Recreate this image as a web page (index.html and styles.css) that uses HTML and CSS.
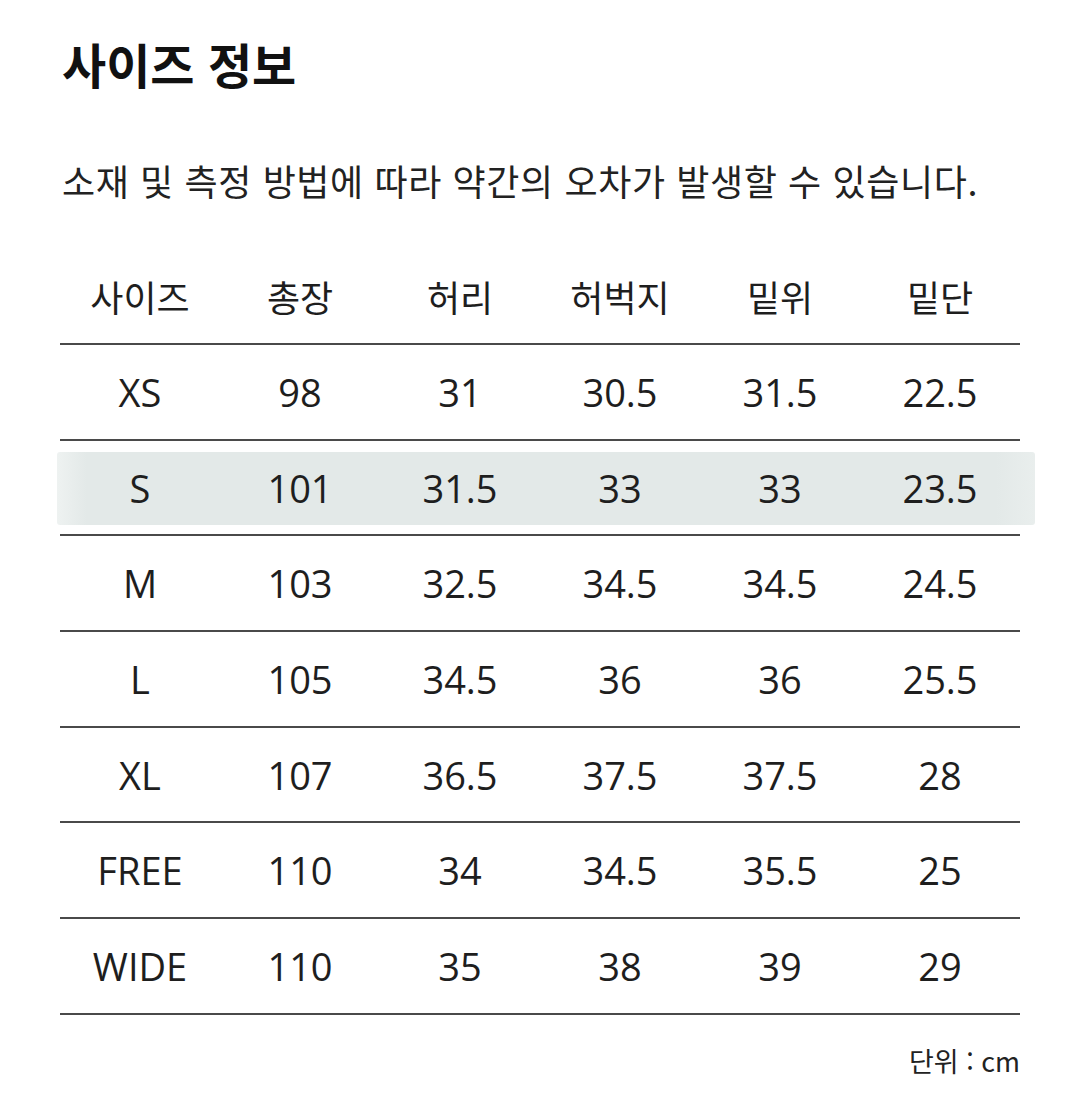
FILE: index.html
```html
<!DOCTYPE html>
<html lang="ko">
<head>
<meta charset="utf-8">
<link rel="stylesheet" href="styles.css">
</head>
<body>
<div class="page">
  <h1 class="title">사이즈 정보</h1>
  <p class="desc">소재 및 측정 방법에 따라 약간의 오차가 발생할 수 있습니다.</p>
  <div class="table">
    <div class="row head"><div class="cells"><span>사이즈</span><span>총장</span><span>허리</span><span>허벅지</span><span>밑위</span><span>밑단</span></div></div>
    <div class="row"><div class="cells"><span>XS</span><span>98</span><span>31</span><span>30.5</span><span>31.5</span><span>22.5</span></div></div>
    <div class="row hl"><div class="cells"><span>S</span><span>101</span><span>31.5</span><span>33</span><span>33</span><span>23.5</span></div></div>
    <div class="row"><div class="cells"><span>M</span><span>103</span><span>32.5</span><span>34.5</span><span>34.5</span><span>24.5</span></div></div>
    <div class="row"><div class="cells"><span>L</span><span>105</span><span>34.5</span><span>36</span><span>36</span><span>25.5</span></div></div>
    <div class="row"><div class="cells"><span>XL</span><span>107</span><span>36.5</span><span>37.5</span><span>37.5</span><span>28</span></div></div>
    <div class="row"><div class="cells"><span>FREE</span><span>110</span><span>34</span><span>34.5</span><span>35.5</span><span>25</span></div></div>
    <div class="row"><div class="cells"><span>WIDE</span><span>110</span><span>35</span><span>38</span><span>39</span><span>29</span></div></div>
  </div>
  <p class="unit">단위 : cm</p>
</div>
</body>
</html>
```
FILE: styles.css
```css
html, body {
  margin: 0;
  padding: 0;
  background: #ffffff;
}
body {
  font-family: "Open Sans", "Noto Sans CJK KR", sans-serif;
  color: #1e1e1e;
}
.page {
  width: 960px;
  padding-left: 60px;
}
.title {
  margin: 33px 0 0 2px;
  font-family: "Noto Sans CJK KR", sans-serif;
  font-weight: 700;
  font-size: 48px;
  line-height: 60px;
  height: 60px;
  color: #111;
}
.desc {
  margin: 62px 0 0 2px;
  font-family: "Noto Sans CJK KR", sans-serif;
  font-size: 36px;
  line-height: 50px;
  height: 50px;
  color: #222;
  letter-spacing: 0.6px;
  white-space: nowrap;
}
.table {
  margin-top: 43px;
}
.row {
  height: 93.7px;
  border-bottom: 2px solid #4a4a4a;
  display: flex;
  align-items: center;
}
.row.head {
  height: 95px;
}
.cells {
  flex: 1;
  display: grid;
  grid-template-columns: repeat(6, 160px);
  font-size: 38px;
  line-height: 50px;
}
.cells span {
  text-align: center;
}
.head .cells {
  font-family: "Noto Sans CJK KR", sans-serif;
  font-size: 36px;
}
.row.hl {
  align-items: flex-start;
}
.hl .cells {
  margin: 11px -15px 0 -3px;
  height: 73px;
  align-items: center;
  padding-left: 3px;
  grid-template-columns: repeat(6, 160px) 15px;
  background: linear-gradient(90deg, #eef2f1 0%, #e3e9e8 3%, #e3e9e8 96%, #e9eeed 100%);
  border-radius: 3px;
}
.unit {
  margin: 26px 0 0 0;
  text-align: right;
  font-family: "Noto Sans CJK KR", sans-serif;
  font-size: 27px;
  line-height: 40px;
  color: #222;
}
```
